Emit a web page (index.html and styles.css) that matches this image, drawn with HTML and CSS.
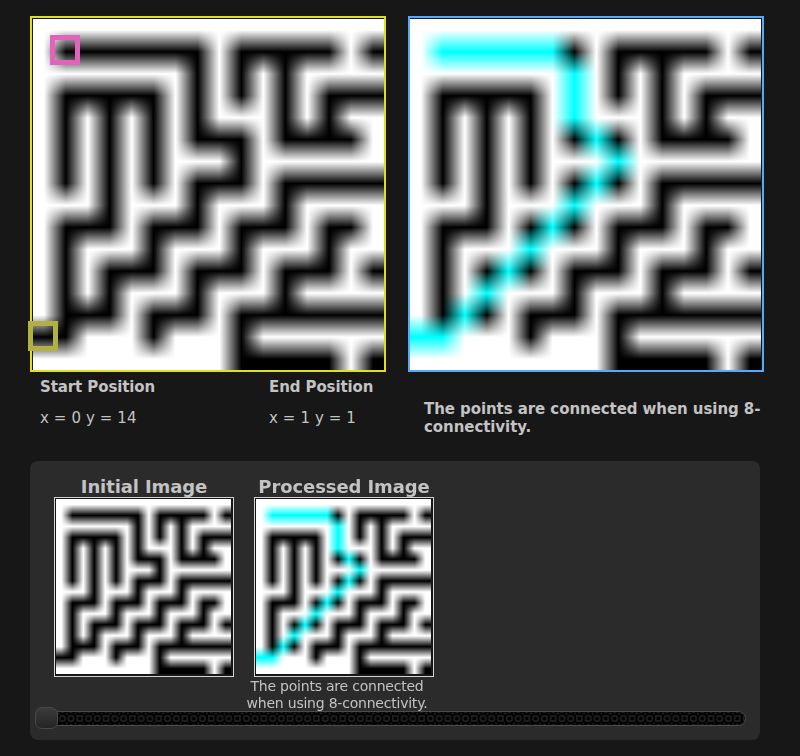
FILE: index.html
```
<!DOCTYPE html>
<html lang="en">
<head>
<meta charset="utf-8">
<title>Connectivity</title>
<link rel="stylesheet" href="styles.css">
</head>
<body>
<main class="page">
  <section class="views">
    <div class="view">
      <div class="frame frame-start">
        <canvas class="maze" width="351" height="351"></canvas>
        <span class="marker marker-end"></span>
        <span class="marker marker-start"></span>
      </div>
      <div class="positions">
        <div class="position"><h4>Start Position</h4><p>x = 0 y = 14</p></div>
        <div class="position"><h4>End Position</h4><p>x = 1 y = 1</p></div>
      </div>
    </div>
    <div class="view">
      <div class="frame frame-result">
        <canvas class="maze" width="351" height="351" data-path></canvas>
      </div>
      <p class="result">The points are connected when using 8-connectivity.</p>
    </div>
  </section>
  <section class="history">
    <div class="thumbs">
      <figure class="thumb">
        <h3>Initial Image</h3>
        <div class="thumb-frame"><canvas class="maze" width="175" height="175"></canvas></div>
      </figure>
      <figure class="thumb">
        <h3>Processed Image</h3>
        <div class="thumb-frame"><canvas class="maze" width="175" height="175" data-path></canvas></div>
        <figcaption>The points are connected<br>when using 8-connectivity.</figcaption>
      </figure>
    </div>
    <div class="slider">
      <svg class="track" width="711" height="15">
        <defs>
          <pattern id="rings" width="26.3" height="26.3" patternUnits="userSpaceOnUse" patternTransform="translate(22.9 -5.6)">
            <g fill="none" stroke="#1f1f1f" stroke-width="1.7">
              <circle cx="4.4" cy="13.1" r="2.8"/>
              <circle cx="13.1" cy="13.1" r="2.8"/>
              <rect x="19.3" y="10.6" width="5" height="5"/>
              <path d="M0 7.6l1.6 1M8.8 7v2.4M8.8 17v2.4M16.6 8.6l1.8-1M16.6 17.6l1.8 1M25 8.6l1.3-1M25 17.6l1.3 1M3 6.9h3M3 19.3h3M11.6 6.9h3M11.6 19.3h3M20.3 6.9h3M20.3 19.3h3"/>
            </g>
          </pattern>
        </defs>
        <rect x=".5" y=".5" width="710" height="14" rx="7" fill="#000"/>
        <rect x=".5" y=".5" width="710" height="14" rx="7" fill="url(#rings)" stroke="#4c4c4c"/>
      </svg>
      <span class="handle"></span>
    </div>
  </section>
</main>
<script src="maze.js"></script>
</body>
</html>
```
FILE: styles.css
```
* { box-sizing: border-box; }

body {
  margin: 0;
  background: #171717;
  color: #c3c3c3;
  font-family: "DejaVu Sans", sans-serif;
}

h3, h4, p, figure { margin: 0; }

.page { padding: 16px 30px; }

.views { display: flex; gap: 22px; height: 445px; }
.view { width: 356px; flex: none; }

.frame {
  position: relative;
  width: 356px;
  height: 356px;
  border: 2px solid #dfdf20;
  padding: 1px 0 0 1px;
}
.frame-result { border-color: #55aaff; padding-left: 0; }
.maze { display: block; width: 351px; height: 351px; }

.marker { position: absolute; width: 30px; height: 30px; }
.marker-end { left: 18px; top: 17px; border: 5px solid #e064be; }
.marker-start { left: -4px; top: 303px; border: 5px solid #b2b042; }

.positions { display: flex; padding: 6px 0 0 10px; }
.position { width: 229px; flex: none; }
.position + .position { width: 110px; }
.position h4 { font-size: 15px; line-height: 18px; white-space: nowrap; letter-spacing: -0.1px; }
.position p { font-size: 15px; line-height: 18px; margin-top: 13px; letter-spacing: 0.1px; }

.result {
  font-size: 15px;
  line-height: 18px;
  font-weight: bold;
  padding: 28px 0 0 16px;
  margin-right: -4px;
  letter-spacing: -0.07px;
}

.history {
  width: 730px;
  height: 279px;
  padding: 16px 5px 0;
  border-radius: 8px;
  background: #2b2b2b;
}
.thumbs { display: flex; gap: 20px; height: 230px; padding-left: 19px; }
.thumb { width: 180px; text-align: center; }
.thumb h3 { font-size: 18px; line-height: 20px; white-space: nowrap; letter-spacing: -0.1px; }
.thumb-frame { width: 180px; height: 180px; border: 1px solid #d3d3d3; padding: 1px; background: #171717; }
.thumb .maze { width: 175px; height: 175px; }
.thumb figcaption {
  font-size: 14px;
  line-height: 17px;
  margin: 1px -15px 0 -29px;
  white-space: nowrap;
  letter-spacing: -0.22px;
}

.slider { position: relative; display: flex; height: 22px; align-items: center; }
.track { display: block; }
.handle {
  position: absolute;
  left: 0;
  top: 0;
  width: 23px;
  height: 22px;
  border: 1px solid #494949;
  border-radius: 7px;
  background: linear-gradient(#3b3b3b, #242424);
}
```
FILE: maze.js
```
const rows = [
  "................",
  ".#######.#####.#",
  ".......#.#.#....",
  ".#####.#.#.#.###",
  ".#.#.#.#...#.#..",
  ".#.#.#.###.####.",
  ".#.#.#...#......",
  ".#.#.#.###.#####",
  "...#...#...#....",
  ".###.###.###.##.",
  ".#...#...#...#..",
  ".#.###.###.###.#",
  ".#.#...#...#....",
  ".###.###.#######",
  "##...#...#......",
  ".........#####.#"
];

// [x, y] cells of the 8-connected route between the two markers
const route = [
  [1, 1], [2, 1], [3, 1], [4, 1], [5, 1], [6, 1], [7, 2], [7, 3], [7, 4],
  [8, 5], [9, 6], [8, 7], [7, 8], [6, 9], [5, 10], [4, 11], [3, 12], [2, 13],
  [1, 14], [0, 14]
];

const WHITE = [255, 255, 255];
const BLACK = [0, 0, 0];
const CYAN = [0, 255, 255];

function buildCells(withRoute) {
  const cells = rows.map((row) => [...row].map((c) => (c === "#" ? BLACK : WHITE)));
  if (withRoute) route.forEach(([x, y]) => { cells[y][x] = CYAN; });
  return cells;
}

// For each output pixel: the two neighbouring cells and the blend between them
function sample(i, size) {
  const last = rows.length - 1;
  const p = Math.min(last, Math.max(0, ((i + 0.5) * rows.length) / size - 0.5));
  const a = Math.floor(p);
  return [a, Math.min(last, a + 1), p - a];
}

document.querySelectorAll(".maze").forEach((canvas) => {
  const ctx = canvas.getContext("2d");
  const size = canvas.width;
  const cells = buildCells("path" in canvas.dataset);
  const image = ctx.createImageData(size, size);
  for (let y = 0; y < size; y++) {
    const [y0, y1, v] = sample(y, size);
    for (let x = 0; x < size; x++) {
      const [x0, x1, u] = sample(x, size);
      const at = (y * size + x) * 4;
      for (let k = 0; k < 3; k++) {
        const top = cells[y0][x0][k] * (1 - u) + cells[y0][x1][k] * u;
        const bottom = cells[y1][x0][k] * (1 - u) + cells[y1][x1][k] * u;
        image.data[at + k] = Math.round(top * (1 - v) + bottom * v);
      }
      image.data[at + 3] = 255;
    }
  }
  ctx.putImageData(image, 0, 0);
});
```
